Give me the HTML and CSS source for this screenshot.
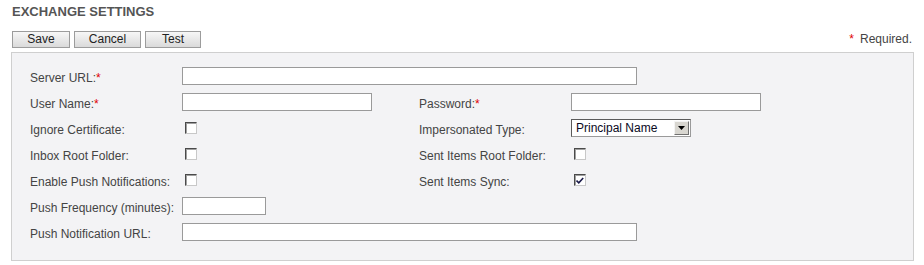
FILE: index.html
```html
<!DOCTYPE html>
<html>
<head>
<meta charset="utf-8">
<title>Exchange Settings</title>
<link rel="stylesheet" href="styles.css">
</head>
<body>
<div class="page">
  <h1 class="title">EXCHANGE SETTINGS</h1>
  <div class="toolbar">
    <div class="buttons">
      <button class="btn btn-save">Save</button>
      <button class="btn btn-cancel">Cancel</button>
      <button class="btn btn-test">Test</button>
    </div>
    <div class="required-note"><span class="req req-note">*</span>Required.</div>
  </div>
  <div class="panel">
    <div class="form">
      <label class="lbl first">Server URL:<span class="req">*</span></label>
      <div class="field span3"><input class="txt txt-wide" type="text"></div>

      <label class="lbl first">User Name:<span class="req">*</span></label>
      <div class="field"><input class="txt txt-mid" type="text"></div>
      <label class="lbl">Password:<span class="req">*</span></label>
      <div class="field"><input class="txt txt-mid" type="password"></div>

      <label class="lbl first">Ignore Certificate:</label>
      <div class="field"><span class="cb"></span></div>
      <label class="lbl">Impersonated Type:</label>
      <div class="field">
        <div class="select">
          <span class="select-text">Principal Name</span>
          <span class="select-btn"><svg width="7" height="4" viewBox="0 0 7 4"><path d="M0 0H7L3.5 4Z" fill="#000"/></svg></span>
        </div>
      </div>

      <label class="lbl first">Inbox Root Folder:</label>
      <div class="field"><span class="cb"></span></div>
      <label class="lbl">Sent Items Root Folder:</label>
      <div class="field"><span class="cb"></span></div>

      <label class="lbl first">Enable Push Notifications:</label>
      <div class="field"><span class="cb"></span></div>
      <label class="lbl">Sent Items Sync:</label>
      <div class="field"><span class="cb cb-checked"><svg width="8" height="7" viewBox="0 0 8 7"><path d="M0.5 3.5L2.8 5.8L7.2 1" fill="none" stroke="#1a1a4a" stroke-width="1.6"/></svg></span></div>

      <label class="lbl first">Push Frequency (minutes):</label>
      <div class="field"><input class="txt txt-small" type="text"></div>

      <label class="lbl first">Push Notification URL:</label>
      <div class="field span3"><input class="txt txt-wide" type="text"></div>
    </div>
  </div>
</div>
</body>
</html>
```
FILE: styles.css
```css
* { box-sizing: border-box; }
html, body { margin: 0; padding: 0; background: #ffffff; }
body {
  font-family: "Liberation Sans", Arial, sans-serif;
  font-size: 12px;
  color: #444444;
}
.page {
  padding: 0 10px 0 11px;
}
.title {
  margin: 4px 0 0 1px;
  font-size: 13px;
  line-height: 15px;
  font-weight: bold;
  color: #555555;
}
.toolbar {
  margin-top: 12px;
  height: 17px;
  margin-bottom: 4px;
  display: flex;
  justify-content: space-between;
  align-items: center;
  padding-left: 1px;
  padding-right: 2px;
}
.buttons {
  display: flex;
  gap: 4px;
}
.btn {
  height: 17px;
  padding: 0;
  margin: 0;
  border: 1px solid #9c9c9c;
  background: linear-gradient(#f7f7f7, #dadada);
  font-family: "Liberation Sans", Arial, sans-serif;
  font-size: 12px;
  line-height: 15px;
  color: #222222;
  text-align: center;
}
.btn-save { width: 58px; }
.btn-cancel { width: 67px; }
.btn-test { width: 56px; }
.required-note {
  color: #444444;
  line-height: 15px;
}
.req { color: #e00000; }
.req-note { margin-right: 6px; }
.panel {
  border: 1px solid #cfcfcf;
  background-color: #f3f3f5;
  background-image: radial-gradient(circle, rgba(0,0,0,0.025) 0.5px, transparent 0.6px);
  background-size: 2px 2px;
  padding: 9px 10px 15px 18px;
}
.form {
  display: grid;
  grid-template-columns: 152px 237px 152px 1fr;
  grid-template-rows: 27px 26px 26px 26px 26px 25px 27px;
  align-items: center;
}
.lbl {
  padding-top: 4px;
  line-height: 14px;
  white-space: nowrap;
}
.lbl.first { grid-column: 1; }
.field {
  display: flex;
  align-items: center;
}
.span3 { grid-column: 2 / 5; }
.txt {
  height: 18px;
  border: 1px solid #9a9a9a;
  background: #ffffff;
  padding: 0 2px;
  margin: 0;
  font-family: "Liberation Sans", Arial, sans-serif;
  font-size: 12px;
}
.txt-wide { width: 455px; }
.txt-mid { width: 190px; }
.txt-small { width: 84px; }
.cb {
  display: flex;
  align-items: center;
  justify-content: center;
  width: 12px;
  height: 12px;
  margin-left: 3px;
  background: #ffffff;
  border-style: solid;
  border-width: 1px;
  border-color: #4a4a4a #c8c8c8 #c8c8c8 #4a4a4a;
  box-shadow: inset 1px 1px 0 #a0a0a0;
}
.select {
  display: flex;
  align-items: center;
  justify-content: space-between;
  width: 120px;
  height: 18px;
  background: #ffffff;
  border-style: solid;
  border-width: 1px;
  border-color: #5a5a5a #9a9a9a #9a9a9a #5a5a5a;
  padding: 0 1px 0 4px;
}
.select-text {
  color: #0a0a1e;
  font-size: 12px;
  line-height: 14px;
}
.select-btn {
  width: 15px;
  height: 14px;
  display: flex;
  align-items: center;
  justify-content: center;
  background: #d8d6d0;
  border-style: solid;
  border-width: 1px;
  border-color: #f4f4f4 #707070 #707070 #f4f4f4;
}
```
